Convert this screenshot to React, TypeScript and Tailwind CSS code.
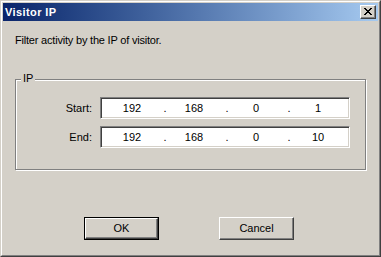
import React from 'react';

const FONT = { fontFamily: '"Liberation Sans", Arial, sans-serif' };

const IpBox = ({ parts }: { parts: string[] }) => (
  <div className="flex h-[22px] w-[250px] items-center border border-t-[#808080] border-l-[#808080] border-b-white border-r-white bg-white shadow-[inset_1px_1px_0_#404040,inset_-1px_-1px_0_#d4d0c8]">
    <div className="grid w-full grid-cols-[1fr_2px_1fr_2px_1fr_2px_1fr] px-[1px]">
      {parts.map((p, i) => (
        <React.Fragment key={i}>
          {i > 0 && <span className="flex translate-x-[2px] justify-center">.</span>}
          <span className="text-center">{p}</span>
        </React.Fragment>
      ))}
    </div>
  </div>
);

const Row = ({ label, parts }: { label: string; parts: string[] }) => (
  <div className="flex items-center">
    <span className="w-[76px] text-right">{label}</span>
    <div className="ml-[8px]">
      <IpBox parts={parts} />
    </div>
  </div>
);

const RaisedButton = ({ label, isDefault }: { label: string; isDefault?: boolean }) => {
  const inner = (
    <div className="flex h-full w-full items-center justify-center border border-t-white border-l-white border-b-[#404040] border-r-[#404040] shadow-[inset_-1px_-1px_0_#808080]">
      {label}
    </div>
  );
  return isDefault ? (
    <div className="h-[23px] w-[75px] border border-black">{inner}</div>
  ) : (
    <div className="h-[23px] w-[75px]">{inner}</div>
  );
};

export default function App() {
  return (
    <div
      style={FONT}
      className="h-[257px] w-[381px] border border-t-[#d4d0c8] border-l-[#d4d0c8] border-b-[#404040] border-r-[#404040] bg-[#d4d0c8] text-[11px] leading-[13px] text-black"
    >
      <div className="h-full w-full border border-t-white border-l-white border-b-[#808080] border-r-[#808080] p-[1px]">
        {/* caption */}
        <div className="flex h-[18px] items-center justify-between bg-gradient-to-r from-[#0a246a] to-[#a6caf0] pl-[2px] pr-[2px]">
          <span className="text-[11px] font-bold tracking-[0.4px] text-white">Visitor IP</span>
          <div className="flex h-[14px] w-[16px] items-center justify-center border border-t-white border-l-white border-b-[#404040] border-r-[#404040] bg-[#d4d0c8] shadow-[inset_-1px_-1px_0_#808080]">
            <svg width="8" height="7" viewBox="0 0 8 7" shapeRendering="crispEdges" className="-mt-[1px]">
              <path
                fill="#000"
                d="M0 0h2v1H0zM6 0h2v1H6zM1 1h2v1H1zM5 1h2v1H5zM2 2h4v1H2zM3 3h2v1H3zM2 4h4v1H2zM1 5h2v1H1zM5 5h2v1H5zM0 6h2v1H0zM6 6h2v1H6z"
              />
            </svg>
          </div>
        </div>

        <div className="flex flex-col pl-[12px]">
          <p className="mt-[13px] tracking-[-0.2px]">Filter activity by the IP of visitor.</p>

          <div className="relative mt-[32px] h-[91px] w-[351px] border border-[#808080] pt-[17px] shadow-[inset_1px_1px_0_#fff,1px_1px_0_#fff]">
            <span className="absolute left-[5px] top-[-8px] bg-[#d4d0c8] px-[2px]">IP</span>
            <div className="flex flex-col gap-[7px]">
              <Row label="Start:" parts={['192', '168', '0', '1']} />
              <Row label="End:" parts={['192', '168', '0', '10']} />
            </div>
          </div>

          <div className="ml-[69px] mt-[47px] flex gap-[60px]">
            <RaisedButton label="OK" isDefault />
            <RaisedButton label="Cancel" />
          </div>
        </div>
      </div>
    </div>
  );
}
